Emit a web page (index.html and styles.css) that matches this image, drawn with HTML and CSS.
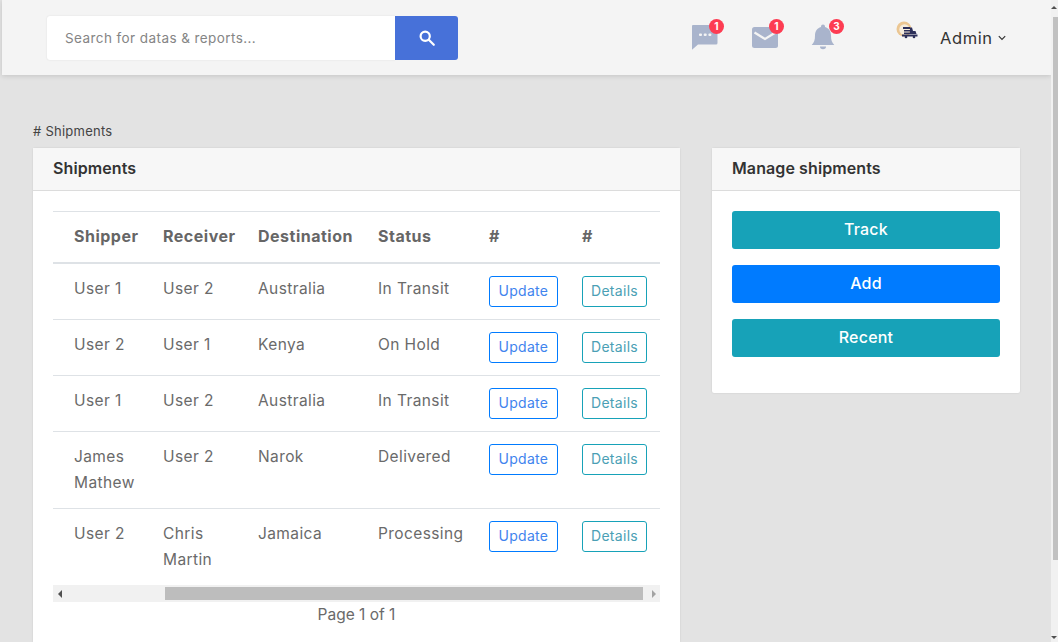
FILE: index.html
```html
<!DOCTYPE html>
<html lang="en">
<head>
<meta charset="UTF-8">
<meta name="viewport" content="width=device-width, initial-scale=1.0">
<title>Shipments</title>
<link rel="stylesheet" href="styles.css">
</head>
<body>
<div class="page">
    <header class="topbar">
        <form class="search">
            <div class="search-input">Search for datas &amp; reports...</div>
            <button class="search-btn" type="button" aria-label="Search">
                <svg width="18" height="18" viewBox="0 0 18 18" fill="none" stroke="#fff" stroke-width="2.2"><circle cx="7.2" cy="7.2" r="4.6"/><path d="M10.8 10.8l5 5" stroke-linecap="round"/></svg>
            </button>
        </form>
        <div class="alerts">
            <div class="alert">
                <svg width="28" height="26" viewBox="0 0 28 26"><path fill="#a9b4cc" d="M2 1h23a1.500 1.500 0 0 1 1.500 1.500V19a1.500 1.500 0 0 1-1.500 1.500H7L1 25.800V2a1 1 0 0 1 1-1z"/><g fill="#f4f4f4"><rect x="8" y="9.500" width="3" height="2.500" rx="1"/><rect x="12.700" y="9.500" width="3" height="2.500" rx="1"/><rect x="17.400" y="9.500" width="3" height="2.500" rx="1"/></g></svg>
                <span class="badge">1</span>
            </div>
            <div class="alert">
                <svg width="28" height="26" viewBox="0 0 28 26"><rect x="1" y="3" width="26" height="21" rx="2.500" fill="#a9b4cc"/><path d="M3.500 8.500l10.500 6.500 10.500-6.500" fill="none" stroke="#f4f4f4" stroke-width="2.200"/></svg>
                <span class="badge">1</span>
            </div>
            <div class="alert">
                <svg width="28" height="26" viewBox="0 0 28 26"><path fill="#a9b4cc" d="M12 .5a2 2 0 0 1 2 2v.600c3.800 1 6 4.300 6 8.400 0 4.400.8 6.900 3.300 9.500H.7C3.200 18.400 4 15.900 4 11.500c0-4.100 2.200-7.400 6-8.400v-.6a2 2 0 0 1 2-2z"/><path fill="#a9b4cc" d="M9 22.500h6a3 2.800 0 0 1-6 0z"/></svg>
                <span class="badge">3</span>
            </div>
        </div>
        <div class="user">
            <svg class="avatar" width="22" height="20" viewBox="0 0 22 20"><circle cx="8" cy="8" r="7.500" fill="#ebc692"/><circle cx="8.500" cy="8.500" r="5.200" fill="#f5ecdc"/><g fill="#2c2f5a"><rect x="7" y="6" width="7" height="2"/><rect x="8" y="9" width="6" height="1.500"/><rect x="8" y="11.500" width="6" height="1.500"/><path d="M14 6.500h2l1 3.500h2.500l1 3H14z"/><rect x="6" y="13.500" width="15.500" height="2"/></g><circle cx="10" cy="16" r="1.300" fill="#2c2f5a"/><circle cx="18" cy="16" r="1.300" fill="#2c2f5a"/></svg>
            <span class="user-name">Admin</span>
            <svg width="8" height="6" viewBox="0 0 8 6" fill="none" stroke="#333" stroke-width="1.200"><path d="M.8 1.200L4 4.400l3.200-3.200"/></svg>
        </div>
    </header>

    <main class="content">
        <div class="main-col">
            <p class="crumb"># Shipments</p>
            <section class="card list-card">
                <h2 class="card-head">Shipments</h2>
                <div class="card-body">
                    <table class="ship-table">
                        <thead>
                            <tr>
                                <th class="c-shipper">Shipper</th>
                                <th class="c-receiver">Receiver</th>
                                <th class="c-dest">Destination</th>
                                <th class="c-status">Status</th>
                                <th class="c-update">#</th>
                                <th class="c-details">#</th>
                            </tr>
                        </thead>
                        <tbody>
                            <tr>
                                <td>User 1</td><td>User 2</td><td>Australia</td><td>In Transit</td>
                                <td><a class="btn-line blue">Update</a></td><td><a class="btn-line teal">Details</a></td>
                            </tr>
                            <tr>
                                <td>User 2</td><td>User 1</td><td>Kenya</td><td>On Hold</td>
                                <td><a class="btn-line blue">Update</a></td><td><a class="btn-line teal">Details</a></td>
                            </tr>
                            <tr>
                                <td>User 1</td><td>User 2</td><td>Australia</td><td>In Transit</td>
                                <td><a class="btn-line blue">Update</a></td><td><a class="btn-line teal">Details</a></td>
                            </tr>
                            <tr>
                                <td>James Mathew</td><td>User 2</td><td>Narok</td><td>Delivered</td>
                                <td><a class="btn-line blue">Update</a></td><td><a class="btn-line teal">Details</a></td>
                            </tr>
                            <tr>
                                <td>User 2</td><td>Chris Martin</td><td>Jamaica</td><td>Processing</td>
                                <td><a class="btn-line blue">Update</a></td><td><a class="btn-line teal">Details</a></td>
                            </tr>
                        </tbody>
                    </table>
                    <div class="hscroll">
                        <span class="hscroll-end"><i class="arrow-left"></i></span>
                        <span class="hscroll-gap"></span>
                        <span class="hscroll-thumb"></span>
                        <span class="hscroll-end"><i class="arrow-right"></i></span>
                    </div>
                    <p class="pager">Page 1 of 1</p>
                </div>
            </section>
        </div>
        <aside class="side-col">
            <section class="card">
                <h2 class="card-head">Manage shipments</h2>
                <div class="card-body actions">
                    <a class="btn-solid teal-bg">Track</a>
                    <a class="btn-solid blue-bg">Add</a>
                    <a class="btn-solid teal-bg">Recent</a>
                </div>
            </section>
        </aside>
    </main>
</div>
<div class="vscroll">
    <i class="arrow-up"></i>
    <span class="vscroll-thumb"></span>
    <i class="arrow-down"></i>
</div>
</body>
</html>
```

FILE: styles.css
```css
html, body {
    height: 100%;
}
body {
    margin: 0;
    display: flex;
    height: 642px;
    overflow: hidden;
    background-color: #e3e3e3;
    font-family: Inter, "Open Sans", sans-serif;
    font-size: 15.500px;
    letter-spacing: 0.4px;
    color: #6a6a6a;
}
.page {
    flex: 1;
    min-width: 0;
    padding-left: 2px;
    display: flex;
    flex-direction: column;
}
.topbar {
    height: 75px;
    flex: none;
    box-sizing: border-box;
    padding: 16px 0 0 45px;
    display: flex;
    align-items: flex-start;
    background-color: #f4f4f4;
    box-shadow: 0 1px 5px rgba(0, 0, 0, 0.14);
}
.search {
    display: flex;
    width: 411px;
    height: 44px;
    margin: 0;
}
.search-input {
    flex: 1;
    padding-left: 18px;
    line-height: 44px;
    font-size: 13.500px;
    letter-spacing: 0.42px;
    color: #858585;
    background-color: #fff;
    border-radius: 3px 0 0 3px;
    box-shadow: 0 0 2px rgba(0, 0, 0, 0.1);
}
.search-btn {
    width: 63px;
    border: none;
    padding: 0;
    display: flex;
    align-items: center;
    justify-content: center;
    background-color: #4771d9;
    border-radius: 0 3px 3px 0;
    cursor: pointer;
}
.alerts {
    display: flex;
    gap: 32px;
    margin-left: 233px;
    padding-top: 8px;
}
.alert {
    position: relative;
    width: 28px;
    height: 26px;
}
.badge {
    position: absolute;
    top: -5px;
    right: -5px;
    width: 15px;
    height: 15px;
    border-radius: 50%;
    background-color: #fd3c52;
    color: #fff;
    font-size: 10px;
    font-weight: 700;
    letter-spacing: 0;
    line-height: 15px;
    text-align: center;
}
.user {
    display: flex;
    align-items: center;
    margin-left: 57px;
    padding-top: 12px;
    color: #333;
}
.avatar {
    margin: -14px 22px 0 0;
}
.user-name {
    font-size: 16.500px;
    letter-spacing: 0.6px;
    margin-right: 5px;
}
.content {
    flex: 1;
    min-height: 0;
    display: flex;
    gap: 32px;
    padding: 0 31px;
    align-items: stretch;
}
.main-col {
    width: 647px;
    flex: none;
    display: flex;
    flex-direction: column;
}
.side-col {
    width: 308px;
    flex: none;
    margin-top: 73px;
}
.crumb {
    margin: 48px 0 9px;
    font-size: 13px;
    letter-spacing: 0.25px;
    line-height: 16px;
    color: #444;
}
.card {
    background-color: #fff;
    border-radius: 2px;
    box-shadow: 0 0 2px rgba(0, 0, 0, 0.12);
}
.list-card {
    flex: 1;
    border-radius: 2px 2px 0 0;
}
.card-head {
    margin: 0;
    height: 43px;
    box-sizing: border-box;
    padding: 0 20px;
    font-size: 16px;
    font-weight: 600;
    letter-spacing: 0.1px;
    line-height: 41px;
    color: #333;
    background-color: #f7f7f7;
    border-bottom: 1px solid #dcdcdc;
}
.card-body {
    padding: 20px 20px 0;
}
.ship-table {
    width: 607px;
    table-layout: fixed;
    border-collapse: collapse;
}
.c-shipper { width: 98px; }
.c-receiver { width: 95px; }
.c-dest { width: 120px; }
.c-status { width: 111px; }
.c-update { width: 93px; }
.c-details { width: 90px; }
.ship-table th, .ship-table td {
    box-sizing: border-box;
    padding: 12px;
    line-height: 26px;
    text-align: left;
    vertical-align: top;
    border-top: 1px solid #dee2e6;
}
.ship-table th {
    font-size: 16px;
    font-weight: 700;
    letter-spacing: 0.5px;
    color: #666;
    padding-top: 11px;
    padding-bottom: 13px;
    border-bottom: 2px solid #dee2e6;
}
.ship-table th:first-child, .ship-table td:first-child {
    padding-left: 21px;
}
.ship-table tbody tr:first-child td {
    border-top: none;
}
.btn-line {
    display: inline-block;
    box-sizing: border-box;
    height: 31px;
    padding: 0 8px;
    font-size: 14px;
    letter-spacing: 0.3px;
    line-height: 28px;
    border: 1px solid;
    border-radius: 3px;
    vertical-align: top;
}
.blue {
    padding: 0 8.500px;
    color: #3f84ee;
    border-color: #007bff;
}
.teal {
    color: #4b9fb5;
    border-color: #17a2b8;
}
.hscroll {
    display: flex;
    align-items: stretch;
    width: 607px;
    height: 17px;
    background-color: #f1f1f1;
}
.hscroll-end {
    width: 17px;
    display: flex;
    align-items: center;
    justify-content: center;
}
.hscroll-gap {
    width: 95px;
}
.hscroll-thumb {
    width: 478px;
    margin: 2px 0;
    background-color: #bdbdbd;
}
.arrow-left, .arrow-right, .arrow-up, .arrow-down {
    display: block;
    width: 0;
    height: 0;
    border: 4px solid transparent;
}
.arrow-left {
    margin-right: 4px;
    border-left-width: 0;
    border-right-color: #505050;
}
.arrow-right {
    margin-left: 4px;
    border-right-width: 0;
    border-left-color: #a3a3a3;
}
.pager {
    margin: 1px 0 0;
    line-height: 24px;
    letter-spacing: 0;
    text-align: center;
}
.actions {
    display: flex;
    flex-direction: column;
    gap: 16px;
    padding-bottom: 36px;
}
.btn-solid {
    height: 38px;
    border-radius: 3px;
    color: #fff;
    font-size: 16px;
    font-weight: 500;
    letter-spacing: 0.2px;
    line-height: 37px;
    text-align: center;
}
.teal-bg {
    background-color: #17a2b8;
}
.blue-bg {
    background-color: #007bff;
}
.vscroll {
    width: 7px;
    flex: none;
    display: flex;
    flex-direction: column;
    align-items: flex-end;
    background-color: #f1f1f1;
}
.arrow-up {
    margin: 6px 1px 0 0;
    border-width: 3px;
    border-top-width: 0;
    border-bottom-color: #505050;
}
.vscroll-thumb {
    width: 5px;
    height: 543px;
    margin-top: 8px;
    background-color: #c1c1c1;
}
.arrow-down {
    margin: auto 1px 3px 0;
    border-width: 3px;
    border-bottom-width: 0;
    border-top-color: #505050;
}
```
